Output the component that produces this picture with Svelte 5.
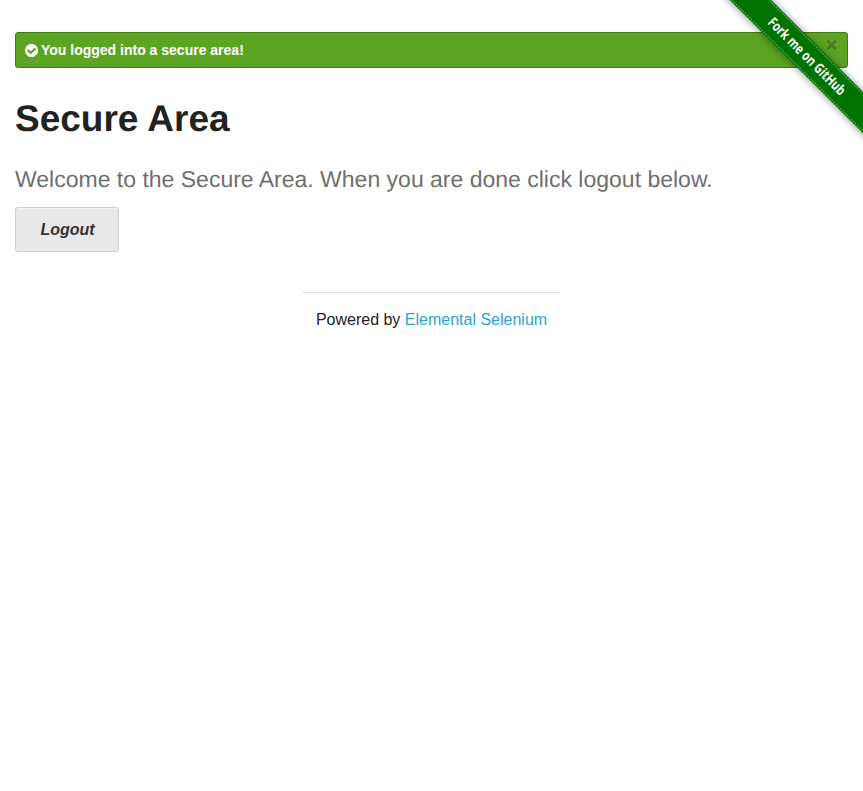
<script>
  const message = 'You logged into a secure area!';
</script>

<div class="page">
  <div class="alert">
    <svg class="check" viewBox="0 0 1536 1536" aria-hidden="true">
      <path fill="#fff" d="M1284 606q0-28-18-46l-91-90q-19-19-45-19t-45 19L677 877 451 651q-19-19-45-19t-45 19l-91 90q-18 18-18 46 0 27 18 45l362 362q19 19 45 19 27 0 46-19l543-543q18-18 18-45zM1536 768q0 209-103 385.500T1153.500 1433 768 1536 382.500 1433 103 1153.500 0 768 103 382.500 382.500 103 768 0 1153.500 103 1433 382.500 1536 768z" />
    </svg>
    <span>{message}</span>
    <a class="close" href="#close">×</a>
  </div>

  <main>
    <h2>Secure Area</h2>
    <h4>Welcome to the Secure Area. When you are done click logout below.</h4>
    <a class="button" href="#logout">Logout</a>
  </main>

  <footer>
    <hr />
    <div>Powered by <a href="#elemental">Elemental Selenium</a></div>
  </footer>

  <svg class="ribbon" width="149" height="149" viewBox="0 0 149 149" role="img">
    <defs>
      <filter id="shade" x="-20%" y="-60%" width="140%" height="220%">
        <feGaussianBlur stdDeviation="4" />
      </filter>
    </defs>
    <g transform="translate(92.750 56.250) rotate(45)">
      <rect x="-120" y="-13.500" width="240" height="28" fill="#000" opacity=".5" filter="url(#shade)" />
      <rect x="-120" y="-14.700" width="240" height="29.400" fill="#007200" />
      <path d="M-120 -13.200H120M-120 13.200H120" stroke="#5fae5f" stroke-width="1" stroke-dasharray="2 1" />
      <text transform="translate(-51.500 4.700) scale(.8 1)" textLength="129" lengthAdjust="spacingAndGlyphs">Fork me on GitHub</text>
    </g>
  </svg>
</div>

<style>
  :global(body) {
    margin: 0;
    background: #fff;
  }
  .page {
    position: relative;
    box-sizing: border-box;
    min-height: 791px;
    padding: 32px 15px 0;
    overflow: hidden;
    font-family: "Liberation Sans", Arial, sans-serif;
    color: #222;
  }
  .alert {
    display: flex;
    align-items: center;
    box-sizing: border-box;
    height: 36px;
    padding: 0 10px 0 9px;
    border: 1px solid #457a1a;
    border-radius: 3px;
    background: #5da423;
    color: #fff;
    font-size: 14px;
    font-weight: bold;
    line-height: 16px;
  }
  .check {
    width: 13px;
    height: 13px;
    margin-right: 3px;
  }
  .close {
    margin: -10px 0 0 auto;
    color: #333;
    font-size: 19px;
    line-height: 16px;
    opacity: 0.4;
    text-decoration: none;
    -webkit-text-stroke: 0.6px #333;
  }
  h2,
  h4 {
    text-rendering: geometricPrecision;
  }
  h2 {
    margin: 25px 0 0;
    font-size: 37px;
    line-height: 52px;
  }
  h4 {
    margin: 18px 0 0;
    color: #6f6f6f;
    font-size: 23px;
    font-weight: normal;
    line-height: 32px;
  }
  .button {
    display: block;
    box-sizing: border-box;
    width: 104px;
    height: 45px;
    margin-top: 12px;
    padding-left: 1px;
    border: 1px solid #d0d0d0;
    border-radius: 3px;
    background: #e9e9e9;
    box-shadow: inset 0 1px 0 rgba(255, 255, 255, 0.5);
    color: #333;
    font-size: 16px;
    font-style: italic;
    font-weight: bold;
    line-height: 43px;
    text-align: center;
    text-decoration: none;
  }
  footer {
    width: 257px;
    margin: 40px auto 0;
    font-size: 16px;
    line-height: 24px;
    text-align: center;
  }
  hr {
    height: 0;
    margin: 0 0 15px;
    border: solid #ddd;
    border-width: 1px 0 0;
  }
  footer a {
    color: #2ba6cb;
    text-decoration: none;
  }
  .ribbon {
    position: absolute;
    top: 0;
    right: 0;
    overflow: visible;
  }
  .ribbon text {
    fill: #fff;
    font-family: "Open Sans", "Noto Sans", sans-serif;
    font-size: 14px;
    font-weight: 700;
  }
</style>
